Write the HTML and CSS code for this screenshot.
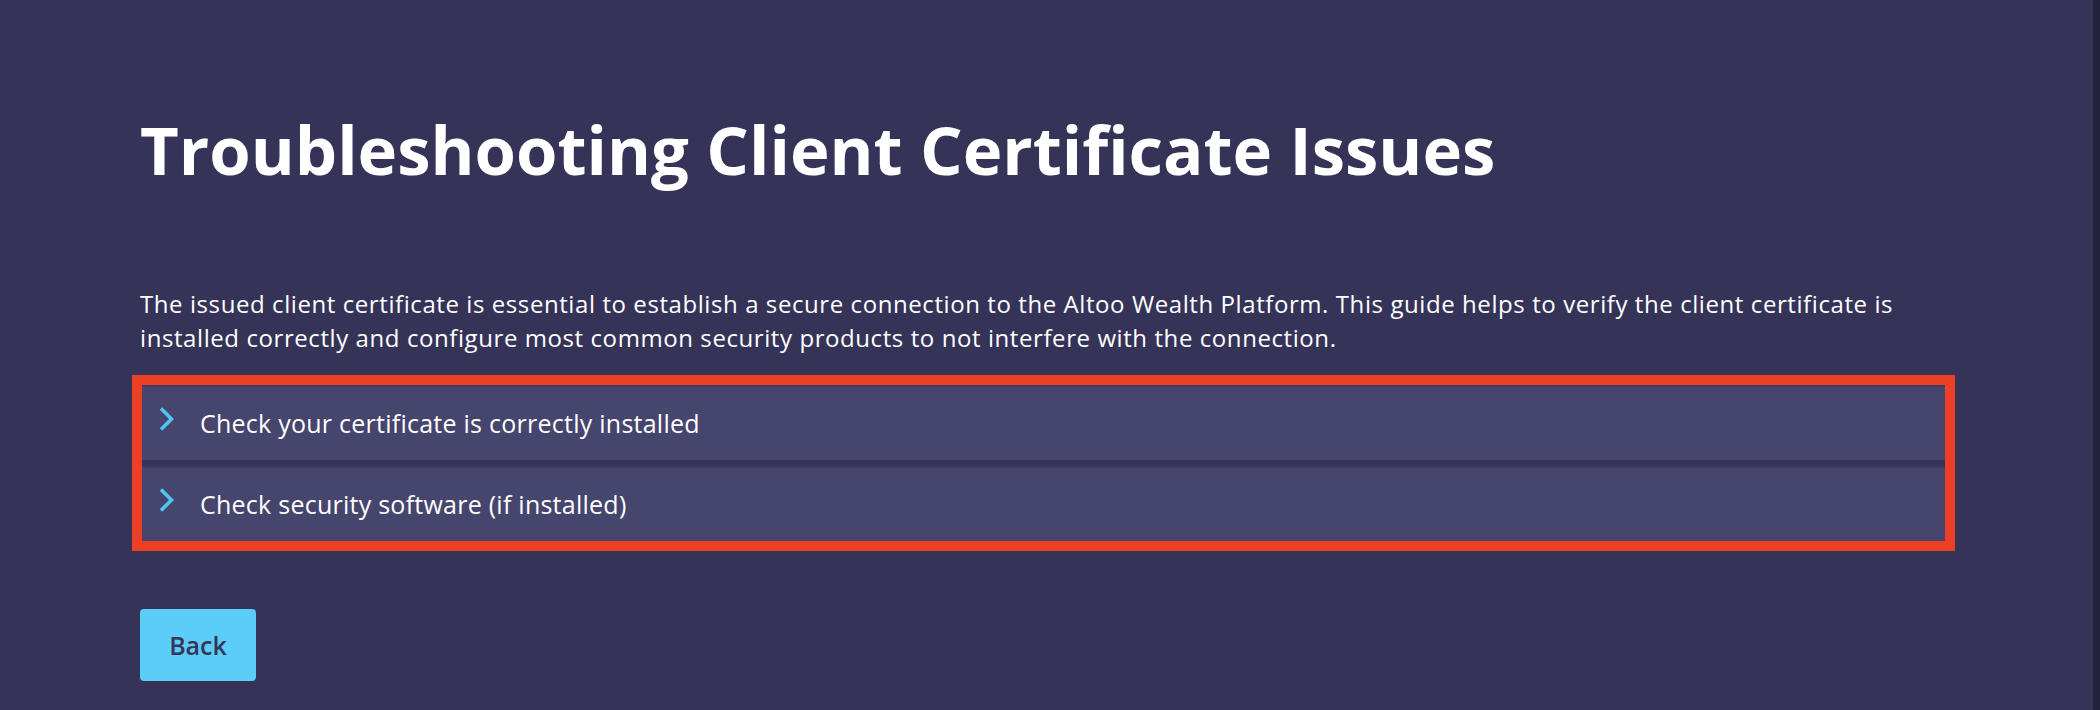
FILE: index.html
```html
<!DOCTYPE html>
<html lang="en">
<head>
<meta charset="utf-8">
<title>Troubleshooting Client Certificate Issues</title>
<link rel="stylesheet" href="styles.css">
</head>
<body>
<div class="shell">
  <main class="page">
    <h1 class="title">Troubleshooting Client Certificate Issues</h1>
    <p class="intro">The issued client certificate is essential to establish a secure connection to the Altoo Wealth Platform. This guide helps to verify the client certificate is installed correctly and configure most common security products to not interfere with the connection.</p>
    <div class="accordion">
      <div class="item">
        <svg class="chev" viewBox="0 0 15 24" width="15" height="24"><path d="M2 1.5 L12.5 12 L2 22.5" fill="none" stroke="#4fc5f2" stroke-width="3.6"/></svg>
        <span class="label">Check your certificate is correctly installed</span>
      </div>
      <div class="item">
        <svg class="chev" viewBox="0 0 15 24" width="15" height="24"><path d="M2 1.5 L12.5 12 L2 22.5" fill="none" stroke="#4fc5f2" stroke-width="3.6"/></svg>
        <span class="label">Check security software (if installed)</span>
      </div>
    </div>
    <button class="back" type="button">Back</button>
  </main>
  <div class="scrollbar"></div>
</div>
</body>
</html>
```

FILE: styles.css
```css
html, body {
  margin: 0;
  padding: 0;
  height: 100%;
}
body {
  background: #363359;
  font-family: "Open Sans", "Noto Sans", sans-serif;
  color: #ffffff;
  overflow: hidden;
}
.shell {
  display: flex;
  height: 710px;
}
.page {
  flex: 1;
  padding: 0 0 0 140px;
  display: flex;
  flex-direction: column;
  align-items: flex-start;
}
.scrollbar {
  width: 7px;
  background: #25223f;
}
.title {
  margin: 109px 0 0 0;
  font-size: 67px;
  line-height: 80px;
  font-weight: 700;
  letter-spacing: 0;
}
.intro {
  margin: 98px 0 0 0;
  width: 1805px;
  font-size: 24px;
  line-height: 34px;
  letter-spacing: 0.58px;
}
.accordion {
  margin: 30px 0 0 2px;
  width: 1803px;
  display: flex;
  flex-direction: column;
  gap: 6px;
  outline: 10px solid #ec4026;
}
.item {
  height: 75px;
  background: #46456d;
  display: flex;
  align-items: center;
  padding-left: 17px;
  box-shadow: inset 0 2px 0 #3d3b63;
}
.chev {
  flex: none;
  margin-top: -8px;
}
.label {
  margin-left: 26px;
  font-size: 25px;
  letter-spacing: 0.25px;
}
.back {
  margin-top: 68px;
  width: 116px;
  height: 72px;
  border: none;
  border-radius: 4px;
  background: #5bcdf6;
  color: #36345a;
  font-family: "Open Sans", "Noto Sans", sans-serif;
  font-size: 25px;
  font-weight: 600;
  letter-spacing: 0;
  padding: 0;
}
```
